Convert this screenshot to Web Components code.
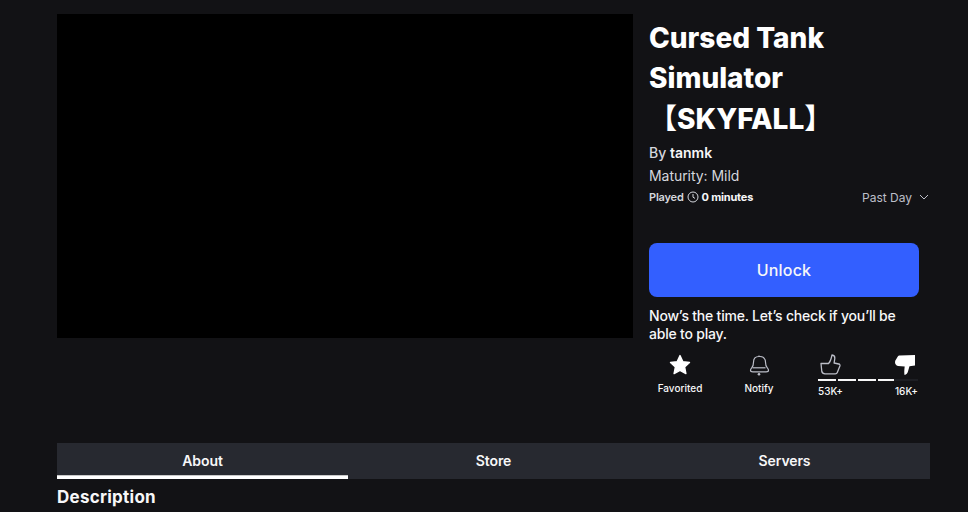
<!DOCTYPE html>
<html><head><meta charset="utf-8"><title>Cursed Tank Simulator</title>
<style>
html,body{margin:0;height:512px;overflow:hidden;background:#121215;color:#f7f7f8;font-family:Inter,"Noto Sans CJK JP",sans-serif}
</style></head><body>
<game-page></game-page>
<template id="t-page"><style>
:host{display:block;padding:14px 38px 0 57px}
.top{display:flex;gap:16px;height:429px}
.media{width:576px;height:324px;background:#000;flex:none}
</style>
<div class="top"><div class="media"></div><game-side></game-side></div>
<game-tabs></game-tabs>
<section-title>Description</section-title>
</template>

<template id="t-side"><style>
:host{display:block;width:281px}
h1{margin:4px 0 0;font-size:28px;line-height:40.4px;font-weight:800;color:#fff;font-family:Inter,"Noto Sans CJK JP",sans-serif;width:210px}
.by{margin-top:4px;font-size:14px;line-height:20px;font-weight:500;color:#d5d7dd}
.by b{font-weight:600;color:#f7f7f8}
.mat{margin-top:3px;font-size:14px;line-height:20px;font-weight:400;letter-spacing:-.05px;color:#d5d7dd}
.played{margin-top:2px;height:18px;display:flex;align-items:center;font-size:11px;font-weight:600;letter-spacing:-.2px;color:#d5d7dd;width:281px}
.played svg{margin:0 3px 0 3px;flex:none}
.played b{font-weight:700;color:#f7f7f8}
.past{margin-left:auto;margin-right:-2px;display:flex;align-items:center;gap:4px;font-size:12px;font-weight:400;letter-spacing:0;color:#bcbec8}
.note{margin:10px 0 0;width:270px;font-size:14px;line-height:18px;font-weight:500;letter-spacing:-.21px;color:#f7f7f8}
</style>
<h1>Cursed Tank Simulator 【SKYFALL】</h1>
<div class="by">By <b>tanmk</b></div>
<div class="mat">Maturity: Mild</div>
<div class="played">Played<svg width="12" height="12" viewBox="0 0 12 12" fill="none" stroke="#d5d7dd"><circle cx="6" cy="6" r="5"/><path d="M6 3v3.2l2 1.2"/></svg><b>0 minutes</b>
<span class="past">Past Day<svg width="10" height="6" viewBox="0 0 10 6" fill="none" stroke="#bcbec8"><path d="M1 1l4 4 4-4"/></svg></span></div>
<unlock-button>Unlock</unlock-button>
<p class="note">Now’s the time. Let’s check if you’ll be able to play.</p>
<game-actions></game-actions>
</template>

<template id="t-btn"><style>
:host{display:flex;align-items:center;justify-content:center;margin-top:37px;width:270px;height:54px;border-radius:8px;background:#335fff;color:#f7f7f8;font-size:16px;font-weight:500;letter-spacing:.2px}
</style><slot></slot></template>

<template id="t-actions"><style>
:host{display:flex;margin-top:8px;width:270px;font-size:10px;font-weight:500;color:#f7f7f8}
.a{display:flex;flex-direction:column;align-items:center;width:62px;flex:none}
.a svg{display:block;margin-top:2px}
.a span{margin-top:5px;line-height:12px}
.n{margin-left:17px}
.v{margin-left:28px;width:100px;flex:none}
.ic{display:flex;justify-content:space-between;margin-top:2px}
.ic svg{display:block}
.bar{display:flex;gap:2px;height:2px;margin-top:2px}
.bar i{flex:none;width:18px;background:#f7f7f8}
.bar i.e{width:16px}
.bar i.r{flex:1;margin-left:-2px;background:#1d1e23}
.lb{display:flex;justify-content:space-between;margin-top:4px;line-height:12px}
</style>
<div class="a"><svg width="24" height="24" viewBox="0 0 24 24"><path fill="#fff" stroke="#fff" stroke-width="1.4" stroke-linejoin="round" d="M12 2.600l2.900 6.100 6.600.8-4.900 4.500 1.300 6.600-5.900-3.300-5.900 3.300 1.300-6.600-4.900-4.500 6.600-.8z"/></svg><span>Favorited</span></div>
<div class="a n"><svg width="24" height="24" viewBox="0 0 24 24" fill="none" stroke="#bcbec8" stroke-width="1.200" stroke-linejoin="round"><path d="M12 2.500v1"/><path d="M12 3.500c-3.500 0-5.500 2.500-5.500 5.800 0 2.700-.5 4.200-1.800 5.600-.9 1-1.200 1.600-1.200 2.300 0 1 .9 1.600 2.400 1.600h13.200c1.500 0 2.400-.6 2.400-1.600 0-.7-.3-1.300-1.200-2.300-1.300-1.400-1.800-2.900-1.800-5.600 0-3.300-2-5.800-5.500-5.800z"/><path d="M5.500 14.800h13"/><circle cx="12" cy="21.300" r="1.300" fill="#bcbec8" stroke="none"/></svg><span>Notify</span></div>
<div class="v">
<div class="ic">
<svg width="24" height="24" viewBox="0 0 24 24" fill="none" stroke="#bcbec8" stroke-width="1.300" stroke-linejoin="round"><path d="M3 10.500h7.500c1.500-1.500 2.800-5 3.500-8.500 2 .3 3 1.500 2.800 3.300l-.7 4.700 4.700 1c1 .2 1.400 1 1.100 2l-2.600 6.500c-.4 1-1 1.300-2 1.300H7c-1.800 0-2.800-.8-3.200-2.300z"/></svg>
<svg width="24" height="24" viewBox="0 0 24 24" fill="#fff"><path d="M1 9c0-1 .5-2 1.300-3.100L3.800 3.500c.5-.8 1-1 2-1.100L21 2v10.500l-5.500 .8-1.600 5.500c-.4 1.500-1.400 2.700-3.400 3.200-.4-2.500-.2-5.500.2-8.500L4 13c-2-.5-3-2-3-4z"/></svg>
</div>
<div class="bar"><i></i><i></i><i></i><i class="e"></i><i class="r"></i></div>
<div class="lb"><span>53K+</span><span>16K+</span></div>
</div>
</template>

<template id="t-tabs"><style>
:host{display:flex;height:36px;background:#272930;font-size:14px;font-weight:600;letter-spacing:-.1px;color:#f7f7f8}
.t{flex:1;display:flex;align-items:center;justify-content:center;padding-bottom:1px}
.on{box-shadow:inset 0 -3px #fff,inset 0 -4px #c8c8c8}
</style><div class="t on">About</div><div class="t">Store</div><div class="t">Servers</div></template>

<template id="t-title"><style>
:host{display:block;margin-top:8px;font-size:17px;line-height:20px;font-weight:700;letter-spacing:.25px;color:#f7f7f8}
</style><slot></slot></template>

<script>
const def=(n,t)=>customElements.define(n,class extends HTMLElement{constructor(){super();this.attachShadow({mode:'open'}).appendChild(document.getElementById(t).content.cloneNode(true))}});
def('section-title','t-title');def('game-tabs','t-tabs');def('game-actions','t-actions');def('unlock-button','t-btn');def('game-side','t-side');def('game-page','t-page');
</script>
</body></html>
